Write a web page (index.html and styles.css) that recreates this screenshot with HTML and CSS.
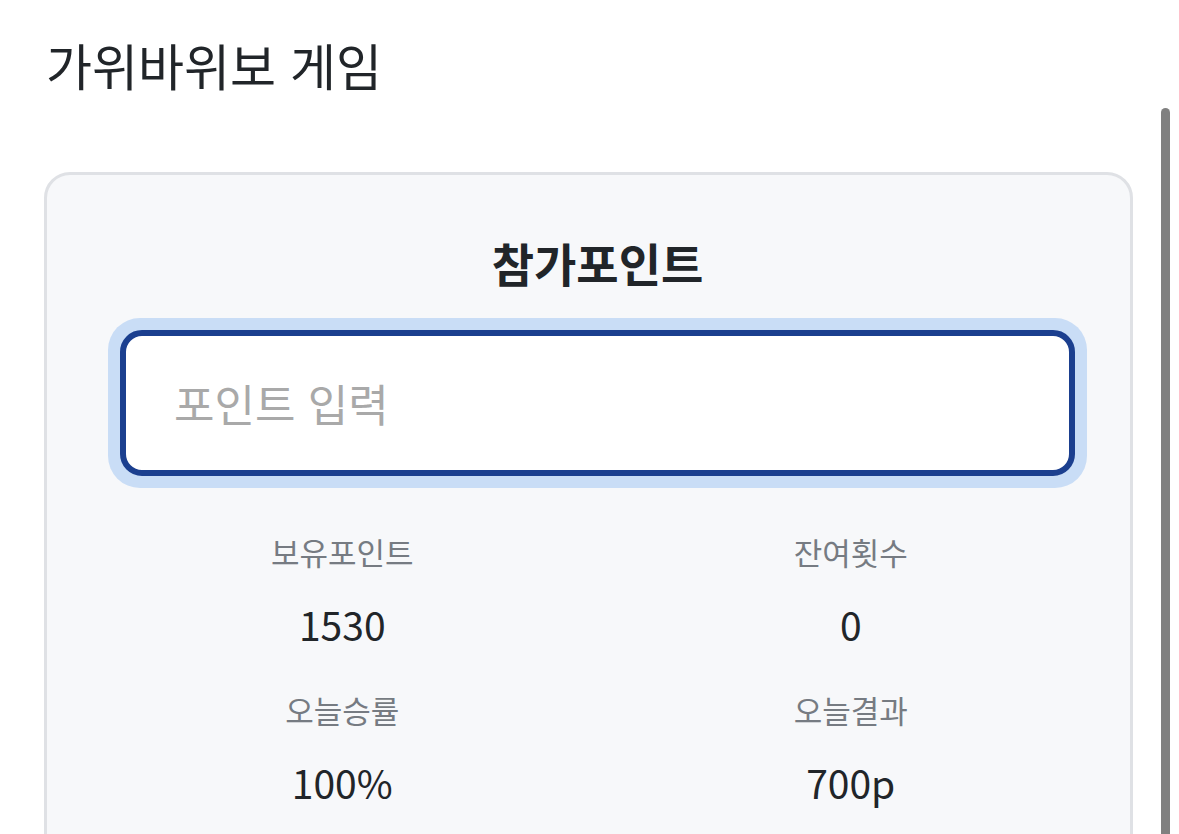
FILE: index.html
```html
<!DOCTYPE html>
<html lang="ko">
<head>
<meta charset="utf-8">
<title>가위바위보 게임</title>
<link rel="stylesheet" href="styles.css">
</head>
<body>
<main class="page">
  <h1 class="page-title">가위바위보 게임</h1>
  <section class="card">
    <h2 class="card-title">참가포인트</h2>
    <div class="field-ring">
      <input class="point-input" type="text" placeholder="포인트 입력">
    </div>
    <div class="stats">
      <div class="stat">
        <div class="stat-label">보유포인트</div>
        <div class="stat-value">1530</div>
      </div>
      <div class="stat">
        <div class="stat-label">잔여횟수</div>
        <div class="stat-value">0</div>
      </div>
      <div class="stat">
        <div class="stat-label">오늘승률</div>
        <div class="stat-value">100%</div>
      </div>
      <div class="stat">
        <div class="stat-label">오늘결과</div>
        <div class="stat-value">700p</div>
      </div>
    </div>
  </section>
</main>
<div class="scrollbar"></div>
</body>
</html>
```
FILE: styles.css
```css
html, body {
  margin: 0;
  padding: 0;
  background: #ffffff;
  overflow: hidden;
}
body {
  font-family: "Noto Sans CJK KR", "Noto Sans", sans-serif;
  color: #212529;
}
.page {
  padding: 0 46px 0 44px;
}
.page-title {
  margin: 0;
  padding: 34px 0 0 2px;
  font-size: 50px;
  font-weight: 400;
  line-height: 60px;
  color: #212529;
}
.card {
  margin-top: 78px;
  background: #f7f8fa;
  border: 3px solid #dfe1e5;
  border-radius: 26px;
  padding: 55px 43px 40px 61px;
  min-height: 700px;
}
.card-title {
  margin: 0;
  text-align: center;
  font-size: 46px;
  font-weight: 700;
  line-height: 64px;
  color: #212529;
}
.field-ring {
  margin-top: 24px;
  padding: 12px;
  background: #c9ddf6;
  border-radius: 32px;
}
.point-input {
  display: block;
  box-sizing: border-box;
  width: 100%;
  height: 146px;
  border: 6.5px solid #1b3f8f;
  border-radius: 22px;
  background: #ffffff;
  padding: 0 48px;
  font-family: "Noto Sans CJK KR", "Noto Sans", sans-serif;
  font-size: 44px;
  color: #212529;
  outline: none;
}
.point-input::placeholder {
  color: #a9a9a9;
}
.stats {
  display: grid;
  grid-template-columns: 1fr 1fr;
  margin: 44px -18px 0 -20px;
  row-gap: 41px;
}
.stat {
  display: flex;
  flex-direction: column;
  align-items: center;
  gap: 27px;
}
.stat-label {
  font-size: 31px;
  line-height: 40px;
  color: #767b82;
}
.stat-value {
  font-size: 39px;
  line-height: 50px;
  color: #212529;
}
.scrollbar {
  position: fixed;
  top: 108px;
  bottom: 0;
  right: 9px;
  width: 9px;
  border-radius: 5px 5px 0 0;
  background: #808080;
}
```
